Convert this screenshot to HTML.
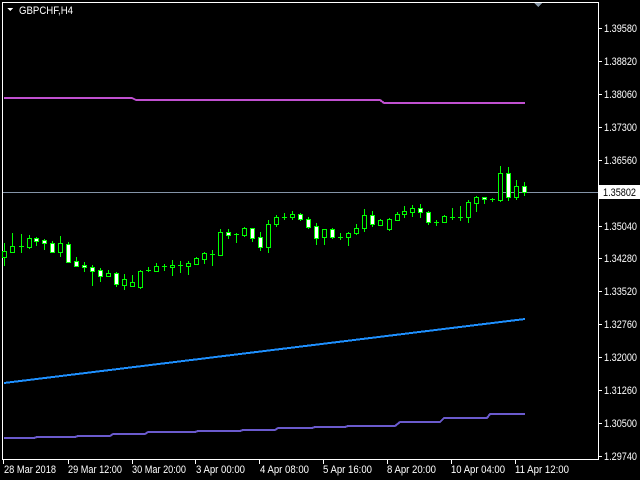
<!DOCTYPE html>
<html><head><meta charset="utf-8"><style>
html,body{margin:0;padding:0;background:#000;width:640px;height:480px;overflow:hidden}
svg{display:block}
text{font-family:"Liberation Sans",sans-serif;font-size:11px;fill:#fff}
</style></head><body>
<svg width="640" height="480" xmlns="http://www.w3.org/2000/svg" shape-rendering="crispEdges">
<rect width="640" height="480" fill="#000"/>
<path d="M2.5 2.5H598.5V459.5H2.5Z" fill="none" stroke="#fff"/>
<line x1="3" y1="192.5" x2="598" y2="192.5" stroke="#8494a8"/>
<polyline points="4,98 132,98 136,100 380,100 384,103 525,103" fill="none" stroke="#c050d0" stroke-width="2"/>
<line x1="4" y1="383" x2="525" y2="319" stroke="#1e90ff" stroke-width="2"/>
<polyline points="4,438 34,438 37,437 75,437 78,436 110,436 113,434 145,434 148,432 195,432 198,431 240,431 243,430 275,430 278,428 312,428 315,427 345,427 348,426 395,426 400,422 440,422 444,418 487,418 490,414 525,414" fill="none" stroke="#6a5acd" stroke-width="2"/>
<g stroke="#00ff00" stroke-width="1">
<path d="M4.5 243V266M12.5 233V253M21.5 234V253M29.5 235V249M36.5 237V246M44.5 239V250M52.5 241V253M60.5 236V257M68.5 242V263M76.5 257V267M84.5 262V272M92.5 265V286M100.5 268V282M108.5 270V277M116.5 272V287M124.5 274V290M132.5 275V287M140.5 270V289M148.5 267V272M156.5 263V272M164.5 264V271M172.5 260V276M180.5 261V273M188.5 261V275M196.5 257V265M204.5 252V264M212.5 250V266M220.5 229V256M228.5 229V239M236.5 233V243M244.5 227V237M252.5 228V242M260.5 232V251M268.5 220V253M276.5 215V227M284.5 213V220M292.5 211V220M300.5 213V221M308.5 217V229M316.5 223V245M324.5 229V245M332.5 228V239M340.5 233V240M348.5 232V246M356.5 224V235M364.5 209V232M372.5 211V227M380.5 219V226M389.5 218V231M397.5 212V221M404.5 206V218M412.5 205V217M420.5 204V218M428.5 211V225M436.5 220V226M444.5 215V223M452.5 208V220M460.5 206V221M468.5 200V223M476.5 196V212M484.5 197V204M492.5 198V202M500.5 166V202M508.5 167V201M516.5 180V200M524.5 182V196"/>
<path d="M19 246.5H24M146 270.5H151M162 266.5H167M178 265.5H183M210 254.5H215M234 234.5H239M282 217.5H287M338 237.5H343M434 222.5H439M450 217.5H455M458 217.5H463M490 199.5H495"/>
<g fill="#000">
<rect x="2.5" y="251.5" width="4" height="6"/><rect x="10.5" y="246.5" width="4" height="6"/><rect x="27.5" y="238.5" width="4" height="9"/>
<rect x="58.5" y="243.5" width="4" height="9"/><rect x="106.5" y="273.5" width="4" height="3"/><rect x="122.5" y="279.5" width="4" height="6"/>
<rect x="130.5" y="282.5" width="4" height="4"/><rect x="138.5" y="271.5" width="4" height="16"/><rect x="154.5" y="266.5" width="4" height="5"/>
<rect x="170.5" y="265.5" width="4" height="2"/><rect x="186.5" y="263.5" width="4" height="3"/><rect x="194.5" y="258.5" width="4" height="6"/>
<rect x="202.5" y="253.5" width="4" height="6"/><rect x="218.5" y="232.5" width="4" height="23"/><rect x="242.5" y="228.5" width="4" height="7"/>
<rect x="266.5" y="224.5" width="4" height="23"/><rect x="274.5" y="217.5" width="4" height="7"/><rect x="290.5" y="214.5" width="4" height="3"/>
<rect x="322.5" y="229.5" width="4" height="8"/><rect x="346.5" y="233.5" width="4" height="4"/><rect x="354.5" y="228.5" width="4" height="5"/>
<rect x="362.5" y="215.5" width="4" height="13"/><rect x="378.5" y="220.5" width="4" height="5"/><rect x="387.5" y="219.5" width="4" height="10"/>
<rect x="395.5" y="214.5" width="4" height="6"/><rect x="402.5" y="211.5" width="4" height="3"/><rect x="410.5" y="208.5" width="4" height="4"/>
<rect x="442.5" y="216.5" width="4" height="6"/><rect x="466.5" y="202.5" width="4" height="15"/><rect x="474.5" y="197.5" width="4" height="6"/>
<rect x="498.5" y="173.5" width="4" height="27"/><rect x="514.5" y="186.5" width="4" height="11"/>
</g>
<g fill="#fff">
<rect x="34.5" y="238.5" width="4" height="3"/><rect x="42.5" y="240.5" width="4" height="3"/><rect x="50.5" y="243.5" width="4" height="9"/>
<rect x="66.5" y="244.5" width="4" height="18"/><rect x="74.5" y="261.5" width="4" height="5"/><rect x="82.5" y="265.5" width="4" height="2"/>
<rect x="90.5" y="267.5" width="4" height="4"/><rect x="98.5" y="270.5" width="4" height="6"/><rect x="114.5" y="273.5" width="4" height="11"/>
<rect x="226.5" y="232.5" width="4" height="3"/><rect x="250.5" y="228.5" width="4" height="10"/><rect x="258.5" y="237.5" width="4" height="10"/>
<rect x="298.5" y="214.5" width="4" height="5"/><rect x="306.5" y="219.5" width="4" height="8"/><rect x="314.5" y="226.5" width="4" height="12"/>
<rect x="330.5" y="229.5" width="4" height="8"/><rect x="370.5" y="215.5" width="4" height="9"/><rect x="418.5" y="208.5" width="4" height="4"/>
<rect x="426.5" y="212.5" width="4" height="10"/><rect x="482.5" y="197.5" width="4" height="2"/><rect x="506.5" y="173.5" width="4" height="24"/>
<rect x="522.5" y="186.5" width="4" height="6"/>
</g>
</g>
<g stroke="#fff"><path d="M598 28.5H602M598 61.5H602M598 94.5H602M598 127.5H602M598 160.5H602M598 226.5H602M598 258.5H602M598 291.5H602M598 324.5H602M598 357.5H602M598 390.5H602M598 423.5H602M598 456.5H602"/>
<path d="M3.5 459V464M68.5 459V464M132.5 459V464M195.5 459V464M259.5 459V464M323.5 459V464M387.5 459V464M451.5 459V464M515.5 459V464"/></g>
<g>
<text x="604" y="32" textLength="33" lengthAdjust="spacingAndGlyphs">1.39580</text>
<text x="604" y="65" textLength="33" lengthAdjust="spacingAndGlyphs">1.38820</text>
<text x="604" y="98" textLength="33" lengthAdjust="spacingAndGlyphs">1.38060</text>
<text x="604" y="131" textLength="33" lengthAdjust="spacingAndGlyphs">1.37300</text>
<text x="604" y="164" textLength="33" lengthAdjust="spacingAndGlyphs">1.36560</text>
<text x="604" y="230" textLength="33" lengthAdjust="spacingAndGlyphs">1.35040</text>
<text x="604" y="262" textLength="33" lengthAdjust="spacingAndGlyphs">1.34280</text>
<text x="604" y="295" textLength="33" lengthAdjust="spacingAndGlyphs">1.33520</text>
<text x="604" y="328" textLength="33" lengthAdjust="spacingAndGlyphs">1.32760</text>
<text x="604" y="361" textLength="33" lengthAdjust="spacingAndGlyphs">1.32000</text>
<text x="604" y="394" textLength="33" lengthAdjust="spacingAndGlyphs">1.31260</text>
<text x="604" y="427" textLength="33" lengthAdjust="spacingAndGlyphs">1.30500</text>
<text x="604" y="460" textLength="33" lengthAdjust="spacingAndGlyphs">1.29740</text>
</g>
<rect x="599" y="185" width="41" height="14" fill="#fff"/>
<text x="603" y="196" textLength="33" lengthAdjust="spacingAndGlyphs" style="fill:#000">1.35802</text>
<g>
<text x="4" y="473" textLength="52" lengthAdjust="spacingAndGlyphs">28 Mar 2018</text>
<text x="68" y="473" textLength="54" lengthAdjust="spacingAndGlyphs">29 Mar 12:00</text>
<text x="132" y="473" textLength="54" lengthAdjust="spacingAndGlyphs">30 Mar 20:00</text>
<text x="196" y="473" textLength="49" lengthAdjust="spacingAndGlyphs">3 Apr 00:00</text>
<text x="260" y="473" textLength="49" lengthAdjust="spacingAndGlyphs">4 Apr 08:00</text>
<text x="323" y="473" textLength="49" lengthAdjust="spacingAndGlyphs">5 Apr 16:00</text>
<text x="387" y="473" textLength="49" lengthAdjust="spacingAndGlyphs">8 Apr 20:00</text>
<text x="451" y="473" textLength="54" lengthAdjust="spacingAndGlyphs">10 Apr 04:00</text>
<text x="515" y="473" textLength="54" lengthAdjust="spacingAndGlyphs">11 Apr 12:00</text>
</g>
<path d="M7 8H13L10 11Z" fill="#fff"/>
<text x="19" y="14" textLength="54" lengthAdjust="spacingAndGlyphs">GBPCHF,H4</text>
<path d="M534 3H542L538 7Z" fill="#8898a8"/>
</svg>
</body></html>
